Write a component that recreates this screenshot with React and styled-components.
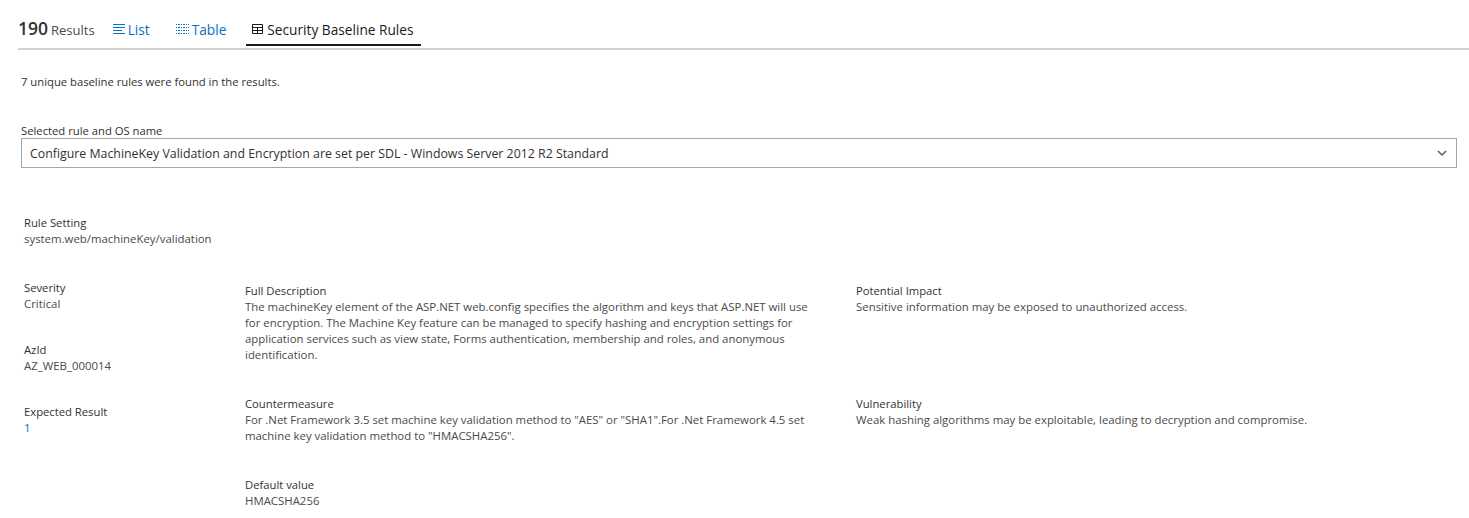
import React from "react";
import styled, { createGlobalStyle } from "styled-components";

const Global = createGlobalStyle`
  html, body { margin: 0; padding: 0; background: #fff; }
  body { font-family: "Open Sans", "Noto Sans", sans-serif; color: #323130; }
`;
const Page = styled.div`
  width: 1469px; height: 518px; overflow: hidden; box-sizing: border-box; padding: 10px 0 0 18px;
`;
const TabBar = styled.div`
  display: flex; align-items: flex-end; height: 38px; width: 1451px; border-bottom: 2px solid #d2d2d2;
`;
const Count = styled.div`
  display: flex; align-items: baseline; height: 36px; margin-bottom: 2px; padding-top: 8px; box-sizing: border-box;
`;
const CountNum = styled.span`font-size: 17.5px; font-weight: 600; color: #323130; margin-right: 3px; line-height: 21px;`;
const CountLabel = styled.span`font-size: 13px; color: #4a4a4a;`;
const Tab = styled.div`
  display: flex; align-items: center; gap: 3px; height: 36px; margin-bottom: 2px; padding: 4px 7px 0 6px;
  margin-left: ${p => p.$ml}px;
  font-size: 13.7px;
  color: ${p => (p.$active ? "#1b1a19" : "#0b6fc2")};
  border-bottom: 2px solid ${p => (p.$active ? "#1b1a19" : "transparent")};
  box-sizing: border-box;
  svg { flex: none; }
`;
const Content = styled.div`padding-left: 3px;`;
const Summary = styled.p`
  margin: 24px 0 0; font-size: 11.25px; font-weight: 500; line-height: 16px; color: #323130;
`;
const FieldLabel = styled.div`
  margin-top: 33px; font-size: 11.25px; line-height: 16px; font-weight: 500; color: #323130;
`;
const Select = styled.div`
  display: flex; align-items: center; justify-content: space-between; box-sizing: border-box;
  width: 1436px; height: 30px; margin-top: -1px; padding: 0 9px 0 8px; border: 1px solid #a6a6a6;
  font-size: 12.35px; color: #323130;
`;
const Info = styled.div`margin-left: ${p => p.$ml || 0}px; margin-top: ${p => p.$mt || 0}px;`;
const InfoTitle = styled.div`font-size: 11.25px; font-weight: 500; line-height: 16px; color: #323130;`;
const InfoValue = styled.div`
  font-size: 11.4px; line-height: 16px; color: ${p => (p.$link ? "#0b6fc2" : "#4a4a4a")};
`;
const Columns = styled.div`
  display: grid; grid-template-columns: 221px 611px 1fr; margin: 33px 0 0 3px;
`;
const Left = styled.div`display: flex; flex-direction: column; gap: 30px;`;
const Right = styled.div`display: flex; flex-direction: column; padding-top: 3px;`;
const Slot = styled.div`height: ${p => p.$h}px; width: ${p => p.$w || "auto"};`;

const ListIcon = () => (
  <svg width="12" height="11" viewBox="0 0 12 11" fill="none" stroke="#0078d4" strokeWidth="1">
    <path d="M0 .5h12M0 3.5h12M0 6.5h9M0 9.5h12" />
  </svg>
);
const DotsIcon = () => (
  <svg width="13" height="10" viewBox="0 0 13 10" fill="#0078d4">
    {[0, 3, 6, 9].flatMap(y =>
      [0, 5, 10].flatMap(x => [
        <rect key={`a${x}-${y}`} x={x} y={y} width="1" height="1" />,
        <rect key={`b${x}-${y}`} x={x + 2} y={y} width="2" height="1" />,
      ])
    )}
  </svg>
);
const GridIcon = () => (
  <svg width="12" height="10" viewBox="0 0 12 10" fill="none" stroke="#1b1a19" strokeWidth="1">
    <path d="M.5.5h10v9H.5zM.5 3.5h10M.5 6.5h10M5.5 3.5v6" />
  </svg>
);
const Chevron = () => (
  <svg width="10" height="6" viewBox="0 0 10 6" fill="none" stroke="#605e5c" strokeWidth="1.5">
    <path d="M1 1l4 4 4-4" />
  </svg>
);

export default function App() {
  return (
    <>
      <Global />
      <Page>
        <TabBar>
          <Count><CountNum>190</CountNum><CountLabel>Results</CountLabel></Count>
          <Tab $ml={12}><ListIcon />List</Tab>
          <Tab $ml={13}><DotsIcon />Table</Tab>
          <Tab $ml={13} $active><GridIcon />Security Baseline Rules</Tab>
        </TabBar>
        <Content>
          <Summary>7 unique baseline rules were found in the results.</Summary>
          <FieldLabel>Selected rule and OS name</FieldLabel>
          <Select>
            Configure MachineKey Validation and Encryption are set per SDL - Windows Server 2012 R2 Standard
            <Chevron />
          </Select>
          <Info $ml={3} $mt={47}>
            <InfoTitle>Rule Setting</InfoTitle>
            <InfoValue>system.web/machineKey/validation</InfoValue>
          </Info>
          <Columns>
            <Left>
              <Info><InfoTitle>Severity</InfoTitle><InfoValue>Critical</InfoValue></Info>
              <Info><InfoTitle>AzId</InfoTitle><InfoValue>AZ_WEB_000014</InfoValue></Info>
              <Info><InfoTitle>Expected Result</InfoTitle><InfoValue $link>1</InfoValue></Info>
            </Left>
            <Right>
              <Slot $h={113} $w="576px">
                <InfoTitle>Full Description</InfoTitle>
                <InfoValue>The machineKey element of the ASP.NET web.config specifies the algorithm and keys that ASP.NET will use for encryption. The Machine Key feature can be managed to specify hashing and encryption settings for application services such as view state, Forms authentication, membership and roles, and anonymous identification.</InfoValue>
              </Slot>
              <Slot $h={81} $w="576px">
                <InfoTitle>Countermeasure</InfoTitle>
                <InfoValue>For .Net Framework 3.5 set machine key validation method to "AES" or "SHA1".For .Net Framework 4.5 set machine key validation method to "HMACSHA256".</InfoValue>
              </Slot>
              <Slot $h={32}>
                <InfoTitle>Default value</InfoTitle>
                <InfoValue>HMACSHA256</InfoValue>
              </Slot>
            </Right>
            <Right>
              <Slot $h={113}>
                <InfoTitle>Potential Impact</InfoTitle>
                <InfoValue>Sensitive information may be exposed to unauthorized access.</InfoValue>
              </Slot>
              <Slot $h={81}>
                <InfoTitle>Vulnerability</InfoTitle>
                <InfoValue>Weak hashing algorithms may be exploitable, leading to decryption and compromise.</InfoValue>
              </Slot>
            </Right>
          </Columns>
        </Content>
      </Page>
    </>
  );
}
